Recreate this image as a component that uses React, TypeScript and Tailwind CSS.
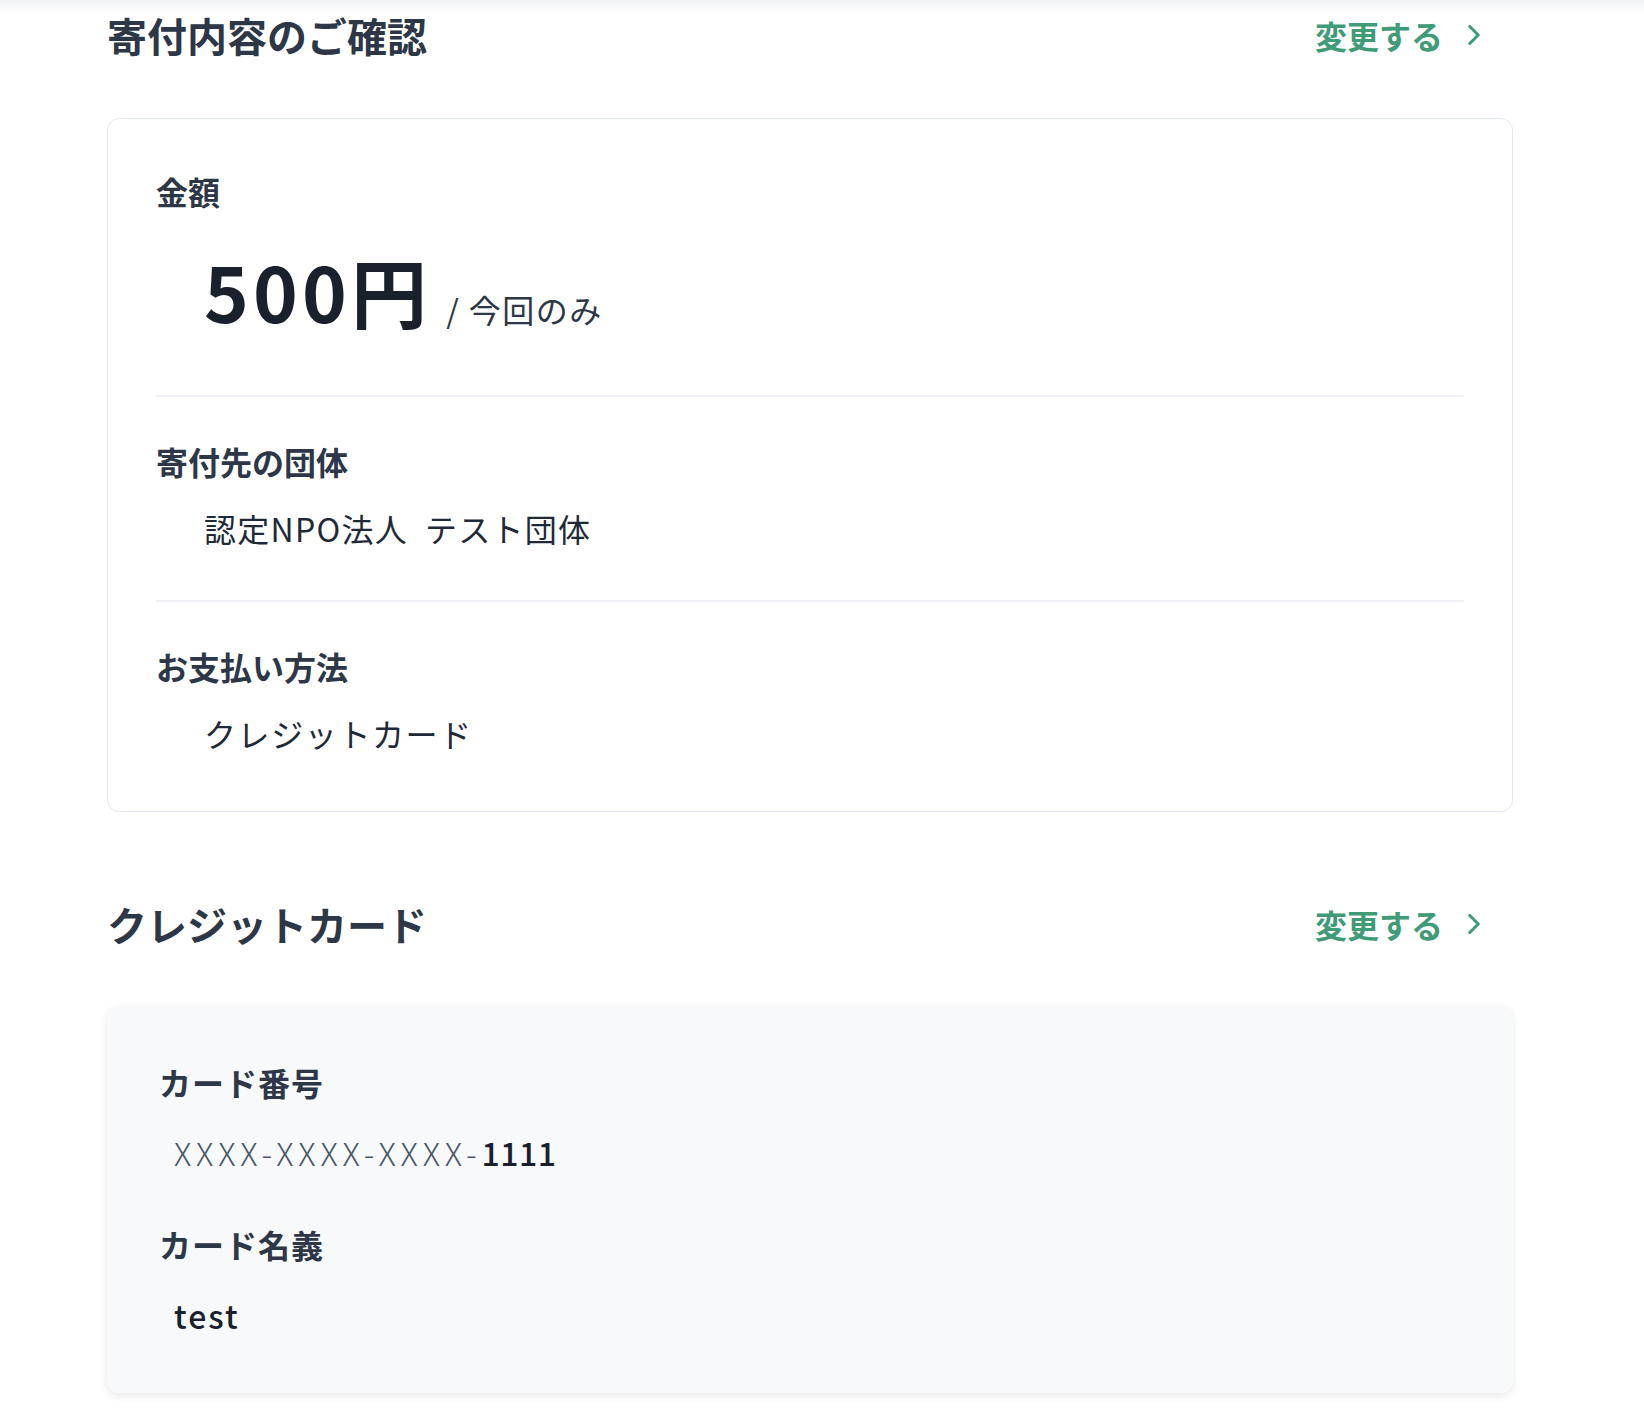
import React from "react";
import { ChevronRight } from "lucide-react";

const font = "font-['Noto_Sans_CJK_JP','Noto_Sans',sans-serif]";

function SectionHeader({ title }: { title: string }) {
  return (
    <div className="flex items-center justify-between">
      <h2 className="text-[40px] leading-[60px] font-bold text-[#2d3748]">{title}</h2>
      <a className="flex items-center mr-[22px] text-[32px] leading-[48px] font-bold text-[#3f9b78]">
        <span>変更する</span>
        <ChevronRight size={34} strokeWidth={2.2} className="ml-[14px]" />
      </a>
    </div>
  );
}

function Label({ children, wide }: { children: React.ReactNode; wide?: boolean }) {
  return (
    <div className={`text-[32px] leading-[48px] font-bold text-[#2d3748] ${wide ? "tracking-[1px]" : ""}`}>
      {children}
    </div>
  );
}

export default function App() {
  return (
    <div className={`${font} min-h-[1418px] bg-[linear-gradient(to_bottom,#f2f3f5,#ffffff_14px)]`}>
      <div className="ml-[107px] w-[1406px] pt-[5px]">
        <SectionHeader title="寄付内容のご確認" />

        <div className="mt-[53px] rounded-xl border border-[#e2e8f0] bg-white px-12 py-2">
          <div className="pt-[40px] pb-[48px]">
            <Label>金額</Label>
            <div className="mt-[18px] ml-12 flex items-baseline">
              <span className="text-[76px] leading-[114px] font-bold tracking-[0.055em] text-[#1a202c]">500円</span>
              <span className="ml-[15px] text-[32px] tracking-[0.045em] text-[#2d3748]">/ 今回のみ</span>
            </div>
          </div>
          <div className="h-[2px] bg-[#eef1f5]" />
          <div className="pt-[40px] pb-[48px]">
            <Label>寄付先の団体</Label>
            <div className="mt-[19px] ml-12 text-[32px] leading-[48px] tracking-[0.04em] text-[#1f2937]">
              認定NPO法人&nbsp; テスト団体
            </div>
          </div>
          <div className="h-[2px] bg-[#eef1f5]" />
          <div className="pt-[40px] pb-[46px]">
            <Label>お支払い方法</Label>
            <div className="mt-[19px] ml-12 text-[32px] leading-[48px] tracking-[0.05em] text-[#1f2937]">
              クレジットカード
            </div>
          </div>
        </div>

        <div className="mt-[82px]">
          <SectionHeader title="クレジットカード" />
        </div>

        <div className="mt-[52px] rounded-xl bg-[#f7f9fb] pl-[52px] pr-12 pt-[52px] pb-[54px] shadow-[0_3px_9px_rgba(0,0,0,0.09)]">
          <Label wide>カード番号</Label>
          <div className="mt-[22px] ml-[15px] text-[32px] leading-[48px]">
            <span className="font-light tracking-[4.8px] text-[#4a5568]">XXXX-XXXX-XXXX-</span>
            <span className="font-medium tracking-[0.5px] text-[#1a202c]">1111</span>
          </div>
          <div className="mt-[44px]">
            <Label wide>カード名義</Label>
          </div>
          <div className="mt-[23px] ml-[15px] text-[32px] leading-[48px] font-medium tracking-[2px] text-[#1a202c]">
            test
          </div>
        </div>
      </div>
    </div>
  );
}
